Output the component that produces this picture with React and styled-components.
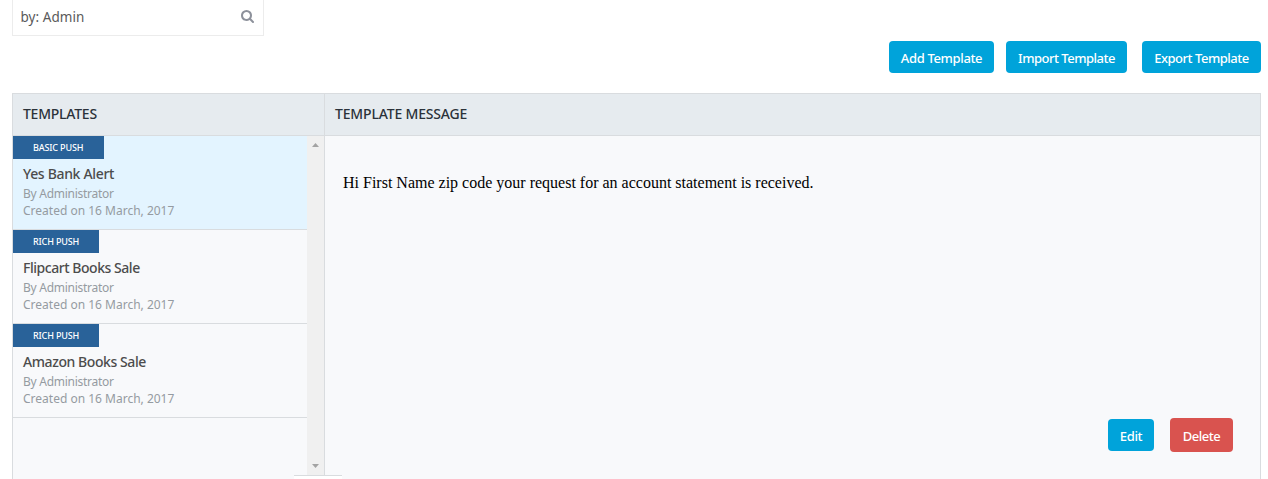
import React from 'react';
import styled, { createGlobalStyle } from 'styled-components';

const GlobalStyle = createGlobalStyle`
  * { box-sizing: border-box; }
  body {
    margin: 0;
    background: #fff;
    font-family: "Noto Sans", "Open Sans", sans-serif;
    overflow: hidden;
  }
`;

const Page = styled.div`
  width: 1268px;
  height: 479px;
  padding: 0 7px 0 12px;
  display: flex;
  flex-direction: column;
  overflow: hidden;
`;

const SearchBox = styled.div`
  width: 252px;
  height: 36px;
  flex: none;
  padding: 0 9px 2px 7.5px;
  display: flex;
  align-items: center;
  justify-content: space-between;
  border: 1px solid #ececec;
  border-top: 0;
  font-size: 13.5px;
  letter-spacing: 0.06px;
  color: #5a5a5a;
  svg { width: 13px; height: 13px; display: block; fill: #8d919b; }
`;

const Toolbar = styled.div`
  height: 57px;
  flex: none;
  padding-top: 5px;
  display: flex;
  justify-content: flex-end;
  align-items: flex-start;
`;

const Button = styled.button`
  width: ${(p) => p.$width}px;
  height: ${(p) => p.$height || 32}px;
  margin: 0 0 0 ${(p) => p.$gap || 0}px;
  padding: 2px 0 0;
  border: 0;
  border-radius: 4px;
  background: ${(p) => (p.$danger ? '#d9534f' : '#00a3da')};
  color: #fff;
  font: 500 13px "Noto Sans", sans-serif;
  letter-spacing: ${(p) => p.$spacing || 0}px;
  white-space: nowrap;
`;

const Panel = styled.div`
  height: 386px;
  flex: none;
  display: grid;
  grid-template-columns: 312px 1fr;
  grid-template-rows: 42px 1fr;
  border: 1px solid #d9dcdf;
  border-bottom: 0;
  background: #f8f9fb;
`;

const Heading = styled.div`
  padding: 0 10px 2px;
  display: flex;
  align-items: center;
  background: #e6ebef;
  border-bottom: 1px solid #d9dcdf;
  border-right: ${(p) => (p.$divided ? '1px solid #d9dcdf' : '0')};
  font-size: 14px;
  font-weight: 500;
  letter-spacing: ${(p) => p.$spacing || 0}px;
  color: #2b323a;
`;

const ListColumn = styled.div`
  position: relative;
  display: flex;
  height: 339px;
  border-right: 1px solid #d9dcdf;
`;

const List = styled.div`
  flex: 1;
`;

const Item = styled.div`
  height: 94px;
  border-bottom: 1px solid #d9dcdf;
  background: ${(p) => (p.$active ? '#e3f4ff' : 'transparent')};
`;

const Tag = styled.div`
  width: ${(p) => p.$width}px;
  height: 23px;
  padding-left: 20px;
  background: #296299;
  color: #fff;
  font-size: 9px;
  line-height: 23px;
  font-weight: 500;
  letter-spacing: -0.15px;
  white-space: nowrap;
`;

const Name = styled.div`
  padding: 5px 10px 1px;
  font-size: 14px;
  line-height: 20px;
  font-weight: 500;
  color: #4c4c4c;
  letter-spacing: ${(p) => p.$spacing || 0}px;
`;

const Meta = styled.div`
  padding: 0 10px;
  font-size: 12px;
  line-height: 17px;
  color: #959ba1;
  letter-spacing: ${(p) => p.$spacing || 0}px;
`;

const Scrollbar = styled.div`
  width: 17px;
  background: #f0f0f0;
  padding: 7px 5px;
  display: flex;
  flex-direction: column;
  justify-content: space-between;
  svg { width: 7px; height: 4px; display: block; fill: #a3a3a3; }
`;

const ResizeTab = styled.div`
  position: absolute;
  left: 281px;
  top: 339px;
  width: 48px;
  height: 5px;
  background: #fff;
  border-top: 1px solid #d9dcdf;
`;

const Message = styled.div`
  padding: 36px 27px 27px 18px;
  display: flex;
  flex-direction: column;
  justify-content: space-between;
`;

const MessageText = styled.p`
  margin: 0;
  font: 16px/22px "Liberation Serif", serif;
  color: #000;
`;

const Actions = styled.div`
  display: flex;
  justify-content: flex-end;
  align-items: center;
`;

const templates = [
  { tag: 'BASIC PUSH', tagWidth: 91, name: 'Yes Bank Alert', spacing: -0.33, active: true },
  { tag: 'RICH PUSH', tagWidth: 86, name: 'Flipcart Books Sale', spacing: -0.46 },
  { tag: 'RICH PUSH', tagWidth: 86, name: 'Amazon Books Sale', spacing: -0.43 },
];

export default function App() {
  return (
    <>
      <GlobalStyle />
      <Page>
        <SearchBox>
          <span>by: Admin</span>
          <svg viewBox="0 128 1664 1664">
            <path d="M1152 832q0-185-131.5-316.5t-316.5-131.5-316.5 131.5-131.5 316.5 131.5 316.5 316.5 131.5 316.5-131.5 131.5-316.5zm512 832q0 52-38 90t-90 38q-54 0-90-38l-343-342q-179 124-399 124-143 0-273.5-55.5t-225-150-150-225-55.5-273.5 55.5-273.5 150-225 225-150 273.5-55.5 273.5 55.5 225 150 150 225 55.5 273.5q0 220-124 399l343 343q37 37 37 90z" />
          </svg>
        </SearchBox>
        <Toolbar>
          <Button $width={105} $spacing={-0.35}>Add Template</Button>
          <Button $width={121} $gap={12} $spacing={-0.5}>Import Template</Button>
          <Button $width={119} $gap={15} $spacing={-0.48}>Export Template</Button>
        </Toolbar>
        <Panel>
          <Heading $divided $spacing={-0.25}>TEMPLATES</Heading>
          <Heading $spacing={-0.17}>TEMPLATE MESSAGE</Heading>
          <ListColumn>
            <List>
              {templates.map((t) => (
                <Item key={t.name} $active={t.active}>
                  <Tag $width={t.tagWidth}>{t.tag}</Tag>
                  <Name $spacing={t.spacing}>{t.name}</Name>
                  <Meta $spacing={-0.27}>By Administrator</Meta>
                  <Meta>Created on 16 March, 2017</Meta>
                </Item>
              ))}
            </List>
            <Scrollbar>
              <svg viewBox="0 0 7 4"><path d="M0 4L3.5 0L7 4z" /></svg>
              <svg viewBox="0 0 7 4"><path d="M0 0L3.5 4L7 0z" /></svg>
            </Scrollbar>
            <ResizeTab />
          </ListColumn>
          <Message>
            <MessageText>Hi First Name zip code your request for an account statement is received.</MessageText>
            <Actions>
              <Button $width={46} $spacing={-0.3}>Edit</Button>
              <Button $danger $width={63} $height={34} $gap={16} $spacing={-0.45}>Delete</Button>
            </Actions>
          </Message>
        </Panel>
      </Page>
    </>
  );
}
